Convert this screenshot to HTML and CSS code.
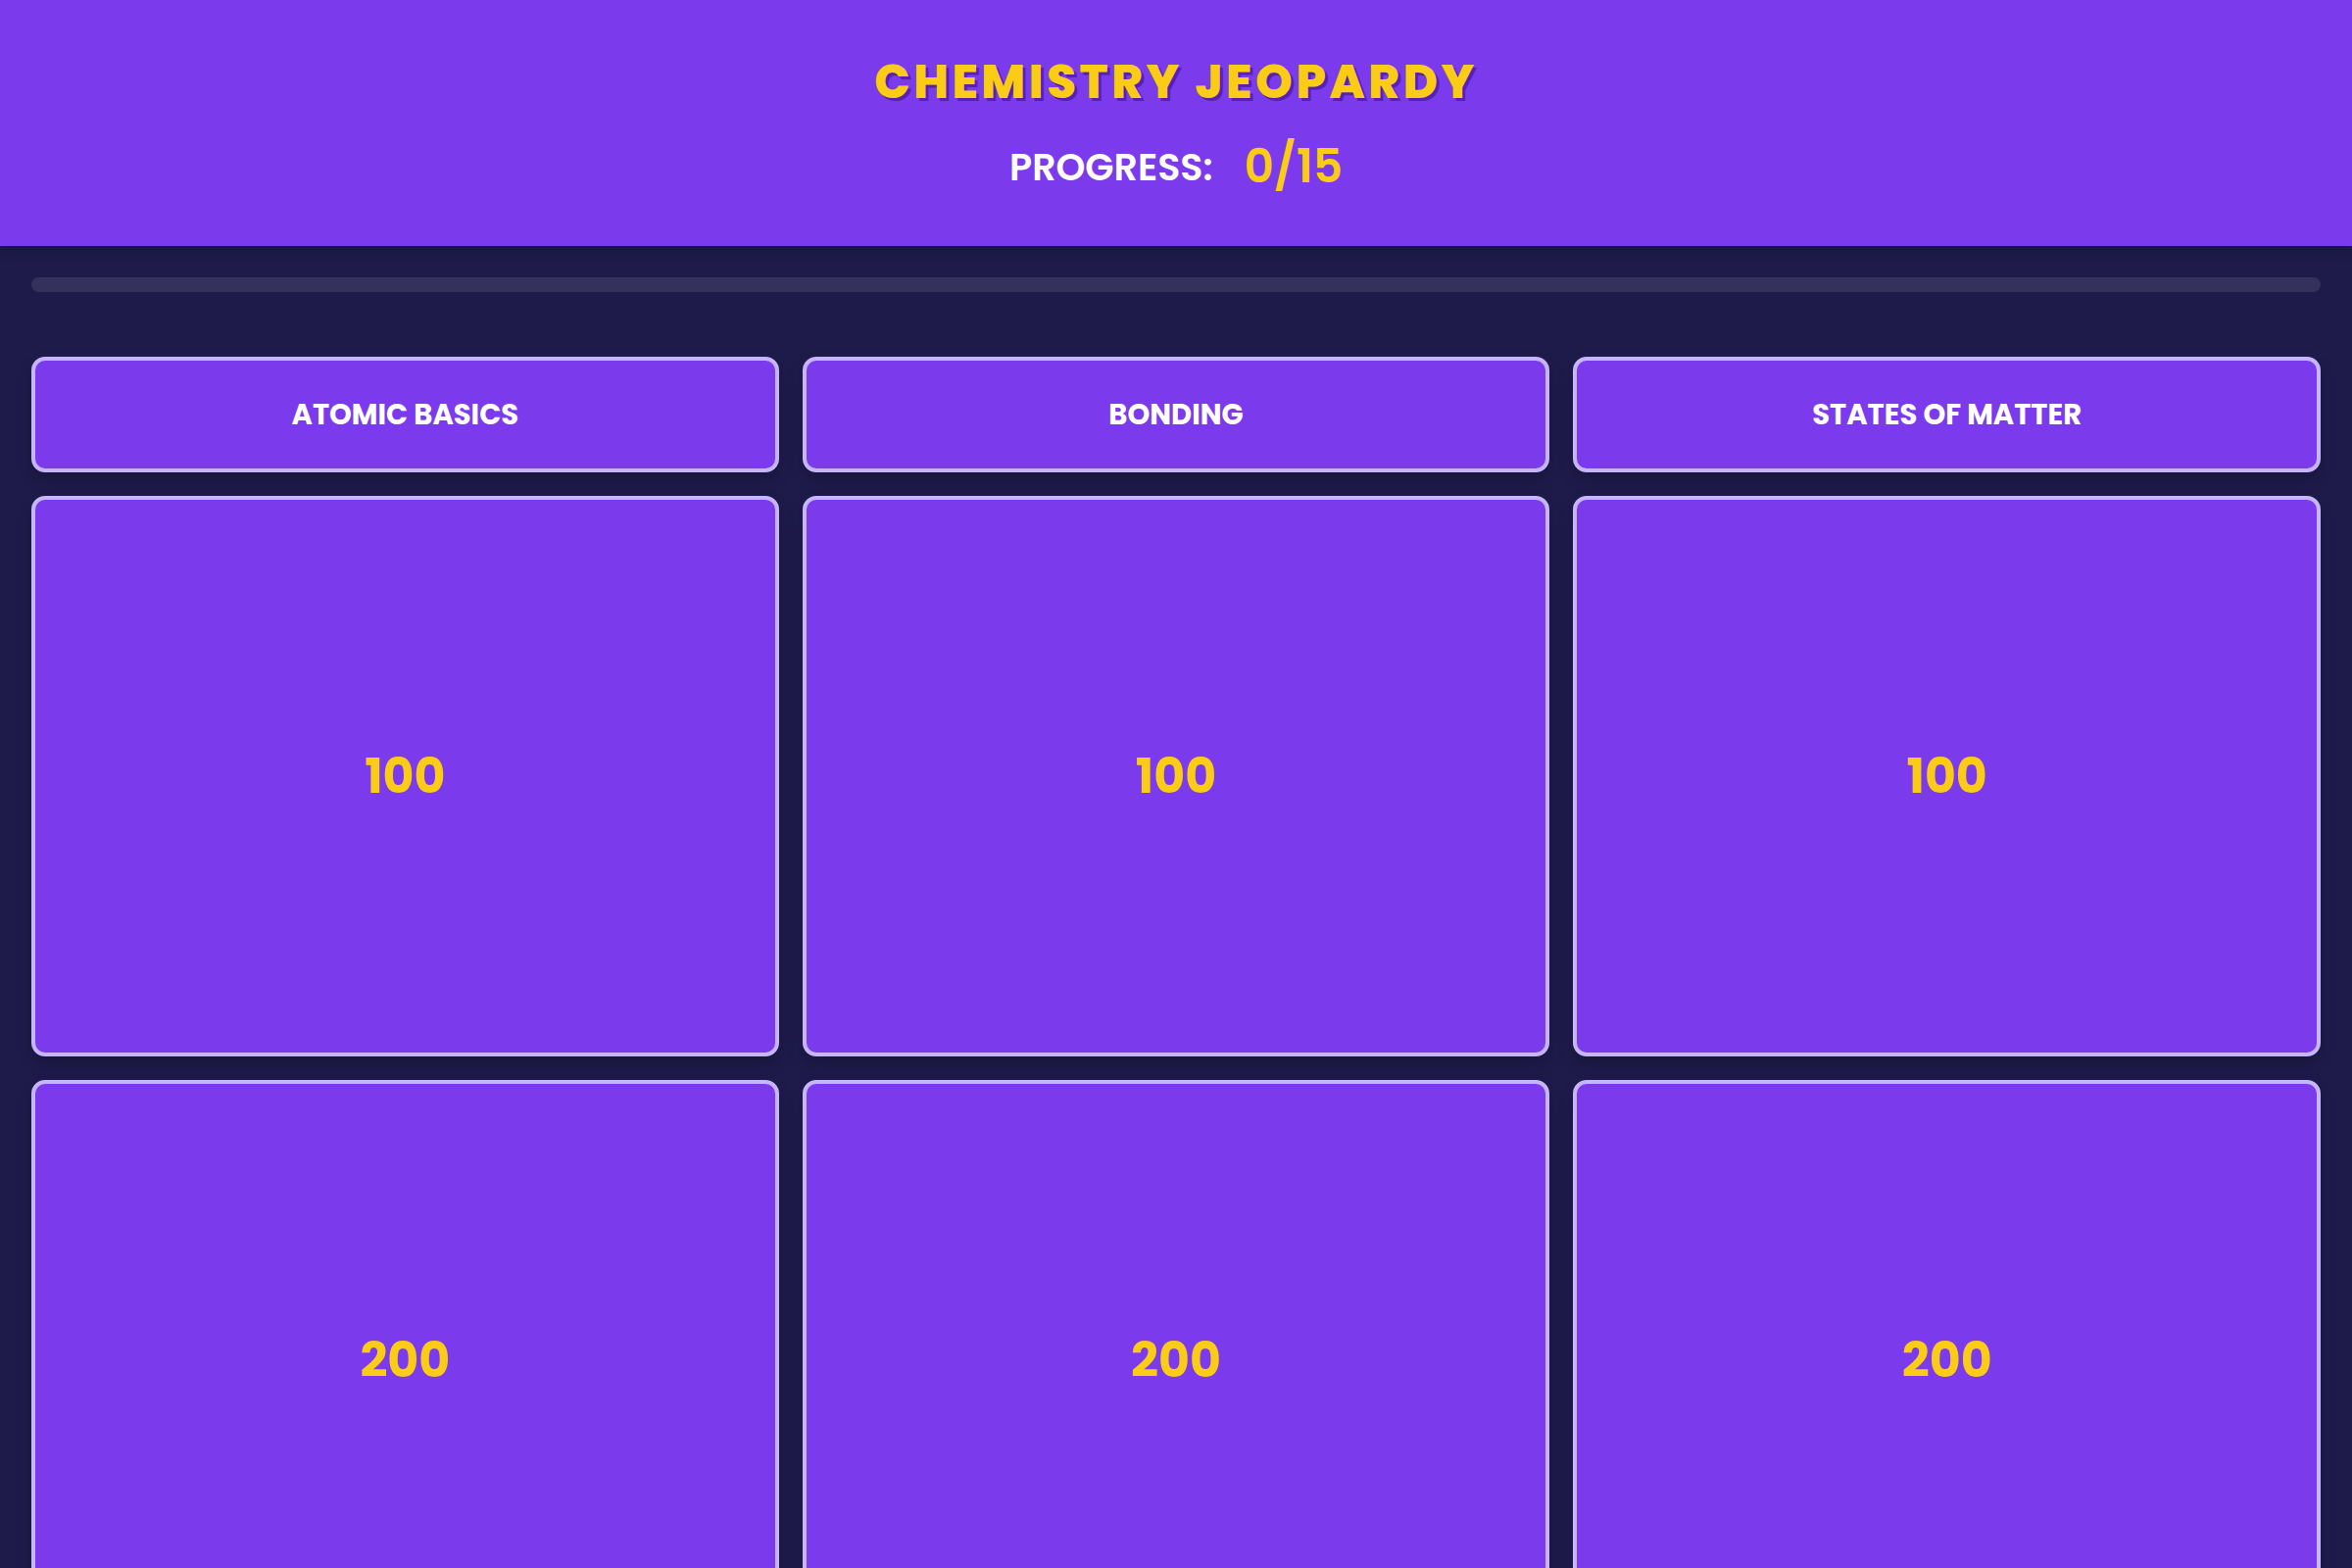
FILE: index.html
```html
<!DOCTYPE html>
<html lang="en">
<head>
<meta charset="utf-8">
<title>Chemistry Jeopardy</title>
<link rel="stylesheet" href="styles.css">
</head>
<body>
<header class="top">
  <h1 class="title">CHEMISTRY JEOPARDY</h1>
  <div class="progress">
    <span class="progress-label">PROGRESS:</span>
    <span class="progress-value">0/15</span>
  </div>
</header>
<main class="board-wrap">
  <div class="track"><div class="track-fill"></div></div>
  <div class="board">
    <div class="cat">ATOMIC BASICS</div>
    <div class="cat">BONDING</div>
    <div class="cat">STATES OF MATTER</div>
    <button class="clue">100</button>
    <button class="clue">100</button>
    <button class="clue">100</button>
    <button class="clue">200</button>
    <button class="clue">200</button>
    <button class="clue">200</button>
    <button class="clue">300</button>
    <button class="clue">300</button>
    <button class="clue">300</button>
    <button class="clue">400</button>
    <button class="clue">400</button>
    <button class="clue">400</button>
    <button class="clue">500</button>
    <button class="clue">500</button>
    <button class="clue">500</button>
  </div>
</main>
</body>
</html>
```

FILE: styles.css
```css
* { box-sizing: border-box; }

body {
  margin: 0;
  background: #1e1b4b;
  font-family: "Poppins", "Inter", "Noto Sans", sans-serif;
}

.top {
  background: #7c3aed;
  height: 251px;
  display: flex;
  flex-direction: column;
  align-items: center;
  padding-top: 52px;
  box-shadow: 0 4px 12px rgba(0, 0, 0, 0.25);
}

.title {
  margin: 0;
  font-size: 48px;
  line-height: 64px;
  font-weight: 800;
  letter-spacing: 3.6px;
  color: #facc15;
  text-shadow: 3px 3px 0 #5522b0;
}

.progress {
  display: flex;
  align-items: center;
  gap: 32px;
  margin-top: 19px;
}

.progress-label {
  color: #ffffff;
  font-size: 38px;
  font-weight: 600;
}

.progress-value {
  color: #facc15;
  font-size: 47px;
  font-weight: 600;
}

.board-wrap {
  padding: 32px 32px;
}

.track {
  height: 15px;
  border-radius: 8px;
  background: rgba(255, 255, 255, 0.1);
  overflow: hidden;
  margin-bottom: 66px;
}

.track-fill {
  width: 0;
  height: 100%;
  background: #facc15;
}

.board {
  display: grid;
  grid-template-columns: repeat(3, 1fr);
  gap: 24px;
}

.cat {
  height: 118px;
  background: #7c3aed;
  border: 4px solid #c4b5fd;
  border-radius: 14px;
  display: flex;
  align-items: center;
  justify-content: center;
  color: #ffffff;
  font-size: 29px;
  font-weight: 700;
  box-shadow: 0 8px 16px rgba(0, 0, 0, 0.2);
}

.clue {
  height: 572px;
  background: #7c3aed;
  border: 4px solid #c4b5fd;
  border-radius: 14px;
  display: flex;
  align-items: center;
  justify-content: center;
  color: #facc15;
  font-family: inherit;
  font-size: 49px;
  font-weight: 700;
  box-shadow: 0 8px 16px rgba(0, 0, 0, 0.2);
  cursor: pointer;
  padding: 0;
}
```
